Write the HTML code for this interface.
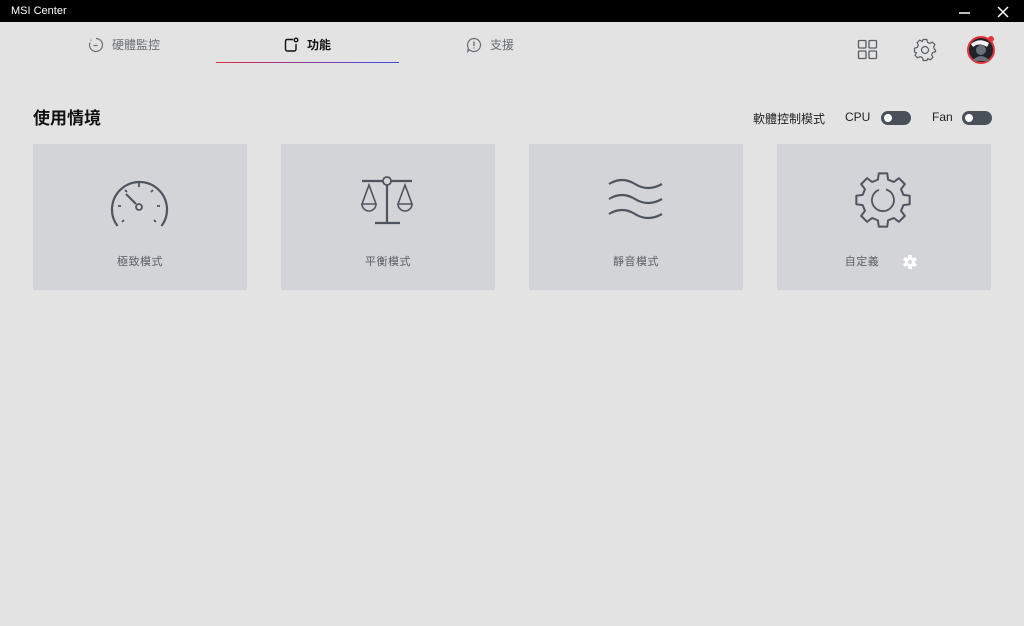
<!DOCTYPE html>
<html><head><meta charset="utf-8"><style>
*{margin:0;padding:0;box-sizing:border-box}
body{width:1024px;height:626px;background:#e3e3e3;font-family:"Liberation Sans","Noto Sans CJK TC",sans-serif;position:relative;overflow:hidden}
.tb{position:absolute;left:0;top:0;width:1024px;height:22px;background:#000;color:#fff;font-size:11px;line-height:22px;padding-left:11px}
.abs{position:absolute}
.tab{position:absolute;top:37px;font-size:12px;color:#6b6e73;line-height:16px}
.card{position:absolute;top:144px;width:214px;height:146px;background:#d3d4d7}
.card .lbl{position:absolute;top:109px;left:0;width:100%;text-align:center;font-size:11px;color:#5a5e64;letter-spacing:0.5px}
.tog{position:absolute;top:111px;width:30px;height:14px;border-radius:7px;background:#4a505a}
.tog:after{content:"";position:absolute;left:3px;top:3px;width:8px;height:8px;border-radius:50%;background:#fff}
</style></head><body>
<div class="tb">MSI Center</div>
<svg class="abs" style="left:956px;top:4px" width="60" height="16"><path d="M3 9H14" stroke="#fff" stroke-width="1.5"/><path d="M42 3L52 13M52 3L42 13" stroke="#fff" stroke-width="1.5"/></svg>

<svg class="abs" style="left:88px;top:37px" width="16" height="16" fill="none" stroke="#6b6e73" stroke-width="1.2"><path d="M8 1.5A6.5 6.5 0 1 1 2 5.5" /><path d="M2.5 3.5L3.3 3" /><path d="M5.5 8.5H9.5"/></svg>
<div class="tab" style="left:112px">硬體監控</div>
<svg class="abs" style="left:283px;top:37px" width="16" height="16" fill="none" stroke="#111" stroke-width="1.4"><path d="M10 2.5H4.5Q2.5 2.5 2.5 4.5V12Q2.5 14 4.5 14H11Q13 14 13 12V7"/><circle cx="13" cy="3" r="1.8"/></svg>
<div class="tab" style="left:307px;color:#111;font-weight:bold">功能</div>
<div class="abs" style="left:216px;top:62px;width:183px;height:1px;background:linear-gradient(90deg,#e0323c,#8a3ca0,#3b4ce0)"></div>
<svg class="abs" style="left:466px;top:37px" width="16" height="16" fill="none" stroke="#6b6e73" stroke-width="1.2"><path d="M8 1.5A6.5 6.5 0 1 1 3.5 12.7L1.8 14.5L2.3 11A6.5 6.5 0 0 1 8 1.5Z"/><path d="M8 4.5V9M8 10.5V11.5" stroke-width="1.4"/></svg>
<div class="tab" style="left:490px">支援</div>

<svg class="abs" style="left:857px;top:39px" width="22" height="22" fill="none" stroke="#5a5e64" stroke-width="1.3"><rect x="1.5" y="1.5" width="7.5" height="7.5" rx="1"/><rect x="12" y="1.5" width="7.5" height="7.5" rx="1"/><rect x="1.5" y="12" width="7.5" height="7.5" rx="1"/><rect x="12" y="12" width="7.5" height="7.5" rx="1"/></svg>
<svg class="abs" style="left:913px;top:38px" width="24" height="24" viewBox="-12 -12 24 24" fill="none" stroke="#5a5e64" stroke-width="1.2"><path d="M-1.8 -10.5L1.8 -10.5L2.5 -7.8L4.8 -6.6L7.4 -7.9L9.9 -5.4L8.6 -2.8L9.5 -0.5L10.5 0L10.5 1.8L7.8 2.5L6.6 4.8L7.9 7.4L5.4 9.9L2.8 8.6L1.8 10.5L-1.8 10.5L-2.5 7.8L-4.8 6.6L-7.4 7.9L-9.9 5.4L-8.6 2.8L-10.5 1.8L-10.5 -1.8L-7.8 -2.5L-6.6 -4.8L-7.9 -7.4L-5.4 -9.9L-2.8 -8.6Z"/><circle r="3.5"/></svg>
<svg class="abs" style="left:964px;top:33px" width="34" height="32"><circle cx="17" cy="17" r="13" fill="#1f2228" stroke="#e8323c" stroke-width="2"/><path d="M7 11Q15 4 25 10L23 14Q15 9 9 14Z" fill="#f2f2f2"/><circle cx="17" cy="17" r="5" fill="#6a7078"/><path d="M8 28Q17 18 26 28" fill="#6a7078"/><circle cx="27" cy="6" r="3" fill="#e8323c"/></svg>

<div class="abs" style="left:33px;top:104px;font-size:17px;font-weight:bold;color:#111">使用情境</div>
<div class="abs" style="left:753px;top:110px;font-size:12px;color:#222">軟體控制模式</div>
<div class="abs" style="left:845px;top:110px;font-size:12px;color:#222">CPU</div>
<div class="tog" style="left:881px"></div>
<div class="abs" style="left:932px;top:110px;font-size:12px;color:#222">Fan</div>
<div class="tog" style="left:962px"></div>

<div class="card" style="left:33px"><div class="lbl">極致模式</div></div>
<div class="card" style="left:281px"><div class="lbl">平衡模式</div></div>
<div class="card" style="left:529px"><div class="lbl">靜音模式</div></div>
<div class="card" style="left:777px"><div class="lbl" style="left:-22px">自定義</div></div>

<svg class="abs" style="left:0;top:0" width="1024" height="626" fill="none" stroke="#4f5560" stroke-width="2.2">
<path d="M117.5 226A27.5 27.5 0 1 1 161.5 226"/>
<path d="M139 183V187M125 190L127 192M153 190L151 192M118 206H121M157 206H160M122 222L124 220M156 222L154 220" stroke-width="1.8"/>
<path d="M126 194L136 204"/><circle cx="139" cy="207" r="3" stroke-width="1.8"/>
<path d="M362 181H383M391 181H412"/><circle cx="387" cy="181" r="4" stroke-width="1.8"/>
<path d="M387 185V223M375 223H400"/>
<path d="M369 185L362 204H376Z M362 204A7 7 0 0 0 376 204" stroke-width="1.6"/>
<path d="M405 185L398 204H412Z M398 204A7 7 0 0 0 412 204" stroke-width="1.6"/>
<path d="M609 184Q622 176 635 184T662 184M609 199Q622 191 635 199T662 199M609 214Q622 206 635 214T662 214"/>
<g transform="translate(883 200)" stroke-width="2"><path d="M20.38 -5.08L26.67 -4.22L26.67 4.22L20.38 5.08L18 10.82L21.84 15.87L15.87 21.84L10.82 18L5.08 20.38L4.22 26.67L-4.22 26.67L-5.08 20.38L-10.82 18L-15.87 21.84L-21.84 15.87L-18 10.82L-20.38 5.08L-26.67 4.22L-26.67 -4.22L-20.38 -5.08L-18 -10.82L-21.84 -15.87L-15.87 -21.84L-10.82 -18L-5.08 -20.38L-4.22 -26.67L4.22 -26.67L5.08 -20.38L10.82 -18L15.87 -21.84L21.84 -15.87L18 -10.82Z" stroke-linejoin="round"/><path d="M3 -10.5A11 11 0 1 1 -4 -10.2" stroke-width="1.8"/></g>
<g transform="translate(910 262)" fill="#fff" stroke="none"><circle r="5"/><rect x="-1.8" y="-7" width="3.6" height="14"/><rect x="-1.8" y="-7" width="3.6" height="14" transform="rotate(60)"/><rect x="-1.8" y="-7" width="3.6" height="14" transform="rotate(120)"/><circle r="2" fill="#d3d4d7"/></g>
</svg>
</body></html>
